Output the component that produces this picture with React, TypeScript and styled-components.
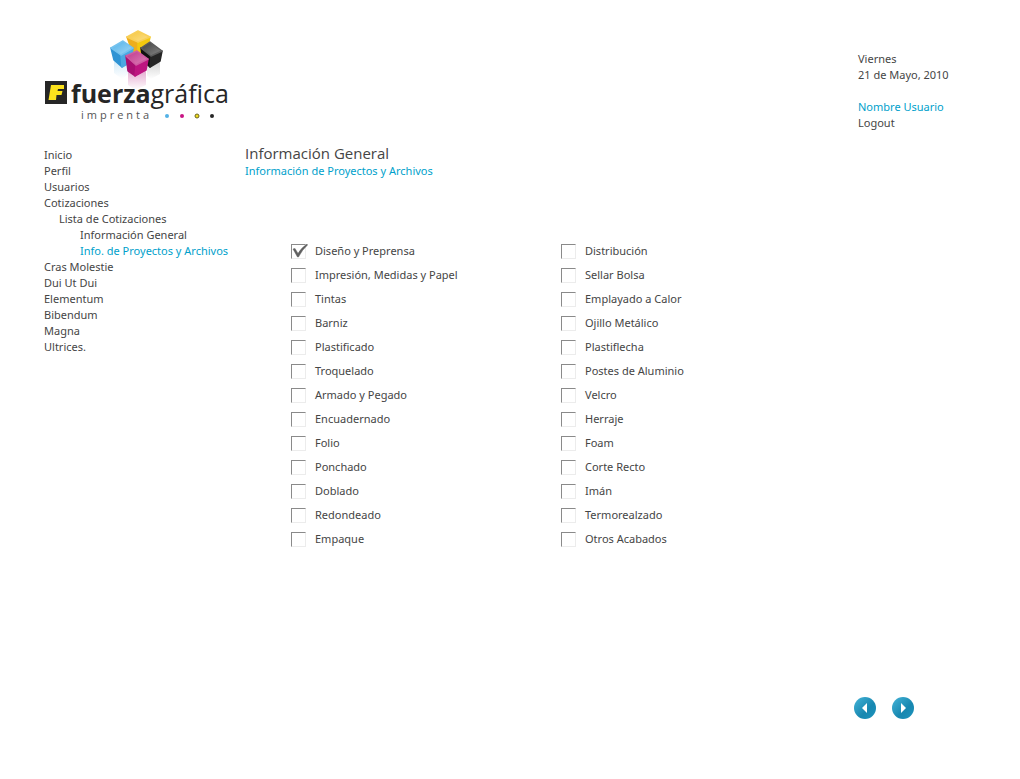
import React from "react";
import styled, { createGlobalStyle } from "styled-components";

const INK = "#454545";
const CYAN = "#009fcb";

const GlobalStyle = createGlobalStyle`
  * { box-sizing: border-box; }
  body {
    margin: 0;
    background: #fff;
    color: ${INK};
    font: 11px/16px "Noto Sans", "Open Sans", sans-serif;
  }
`;

const Page = styled.div`
  padding: 28px 44px 59px;
`;

const Header = styled.header`
  display: flex;
  justify-content: space-between;
  align-items: flex-start;
  min-height: 117px;
`;

const Session = styled.div`
  width: 118px;
  padding-top: 23px;
`;

const DateText = styled.p`
  margin: 0 0 16px;
`;

const TextLink = styled.a<{ $active?: boolean }>`
  display: block;
  color: ${(p) => (p.$active ? CYAN : INK)};
  text-decoration: none;
  white-space: nowrap;
`;

const Body = styled.div`
  display: flex;
`;

const Sidebar = styled.nav`
  flex: 0 0 201px;
  padding-top: 2px;
`;

const NavList = styled.ul`
  margin: 0;
  padding: 0;
  list-style: none;
`;

const NavItem = styled.li<{ $level?: number }>`
  padding-left: ${(p) => [0, 15, 36][p.$level ?? 0]}px;
`;

const Main = styled.main`
  flex: 1;
`;

const Title = styled.h1`
  margin: 0;
  font-family: "Open Sans", sans-serif;
  font-size: 15px;
  line-height: 16px;
  font-weight: 400;
`;

const Subtitle = styled.h2`
  margin: 0;
  color: ${CYAN};
  font-size: 11px;
  line-height: 20px;
  font-weight: 400;
`;

const Options = styled.form`
  display: grid;
  grid-template-columns: repeat(2, minmax(0, 1fr));
  max-width: 586px;
  padding: 58px 0 0 46px;
`;

const OptionRow = styled.label`
  display: flex;
  align-items: center;
  gap: 9px;
  height: 24px;
`;

const CheckWrap = styled.span`
  position: relative;
  display: flex;
`;

const Checkbox = styled.input`
  appearance: none;
  width: 15px;
  height: 15px;
  margin: 0;
  border: 1px solid #ececec;
  border-top-color: #8a8a8a;
  border-left-color: #8a8a8a;
  background: #fff;

  & + svg { display: none; }
  &:checked + svg { display: block; }
`;

const CheckMark = styled.svg`
  position: absolute;
  left: 0;
  top: 0;
  pointer-events: none;
`;

const Pager = styled.footer`
  display: flex;
  justify-content: flex-end;
  gap: 16px;
  padding: 146px 62px 0 0;
`;

const PagerButton = styled.button`
  display: grid;
  place-items: center;
  width: 22px;
  height: 22px;
  padding: 0;
  border: 0;
  border-radius: 50%;
  background: linear-gradient(135deg, #45b4d8, #1787b0 60%, #1d94bd);
  cursor: pointer;
`;

const Wordmark = styled.text`
  font: 400 25px "Open Sans", sans-serif;
  fill: #262626;
`;

const Tagline = styled.text`
  font: 400 11px "Open Sans", sans-serif;
  letter-spacing: 3px;
  fill: #555;
`;

function Logo() {
  return (
    <svg width="190" height="96" viewBox="0 0 190 96" role="img" aria-label="Fuerza Gráfica Imprenta">
      <defs>
        <linearGradient id="yTop" x1="0" y1="0" x2="1" y2="1"><stop offset="0" stopColor="#f6c53c" /><stop offset="1" stopColor="#fbe08a" /></linearGradient>
        <linearGradient id="bTop" x1="0" y1="0" x2="1" y2="1"><stop offset="0" stopColor="#4fb0e8" /><stop offset="1" stopColor="#a4d9f6" /></linearGradient>
        <linearGradient id="mTop" x1="0" y1="0" x2="1" y2="1"><stop offset="0" stopColor="#c0368c" /><stop offset="1" stopColor="#dd83b8" /></linearGradient>
        <linearGradient id="kTop" x1="0" y1="0" x2="1" y2="1"><stop offset="0" stopColor="#3c3c3c" /><stop offset="1" stopColor="#8a8a8a" /></linearGradient>
        <linearGradient id="bRef" x1="0" y1="0" x2="0" y2="1"><stop offset="0" stopColor="#4aa8e0" stopOpacity=".25" /><stop offset="1" stopColor="#4aa8e0" stopOpacity="0" /></linearGradient>
        <linearGradient id="mRef" x1="0" y1="0" x2="0" y2="1"><stop offset="0" stopColor="#b5127c" stopOpacity=".35" /><stop offset="1" stopColor="#b5127c" stopOpacity="0" /></linearGradient>
        <linearGradient id="kRef" x1="0" y1="0" x2="0" y2="1"><stop offset="0" stopColor="#333" stopOpacity=".22" /><stop offset="1" stopColor="#333" stopOpacity="0" /></linearGradient>
      </defs>
      <path d="M70 32 78 39 84 35V46L78 51 70 45Z" fill="url(#bRef)" />
      <path d="M103 36 107 39 116 33V46L107 51 103 48Z" fill="url(#kRef)" />
      <path d="M84 43 91 49 102 43V57L91 62 84 57Z" fill="url(#mRef)" />
      <g strokeLinejoin="round" strokeWidth="1.500">
        <path d="M83 9 94 14 94 27 88 23Z" fill="#eeae1c" stroke="#eeae1c" />
        <path d="M94 14 106 9 103 22 94 27Z" fill="#f4c90e" stroke="#f4c90e" />
        <path d="M94 3 106 9 94 14 83 9Z" fill="url(#yTop)" stroke="#f8cf58" />
        <path d="M67 20 77 27 78 39 70 32Z" fill="#2f93d4" stroke="#2f93d4" />
        <path d="M77 27 89 20 87 34 78 39Z" fill="#4ba8e2" stroke="#4ba8e2" />
        <path d="M79 13 89 20 77 27 67 20Z" fill="url(#bTop)" stroke="#74c2ee" />
        <path d="M97 20 107 28 106 39 99 33Z" fill="#111" stroke="#111" />
        <path d="M107 28 118 23 116 33 106 39Z" fill="#262626" stroke="#262626" />
        <path d="M106 14 118 23 107 28 97 20Z" fill="url(#kTop)" stroke="#5c5c5c" />
        <path d="M82 28 92 37 91 48 84 43Z" fill="#a80f72" stroke="#a80f72" />
        <path d="M92 37 104 31 102 42 91 48Z" fill="#bd1580" stroke="#bd1580" />
        <path d="M93 23 104 31 92 37 82 28Z" fill="url(#mTop)" stroke="#cf5ba2" />
      </g>
      <rect x="1" y="53" width="22" height="23" fill="#262626" />
      <path d="M7 57H20V61H14L13.500 63H18.500L17.500 67H12.500L12 72H4.500Z" fill="#fce21d" />
      <Wordmark x="27" y="75"><tspan fontWeight="700">fuerza</tspan>gráfica</Wordmark>
      <Tagline x="37" y="91">imprenta</Tagline>
      <circle cx="123" cy="88" r="2" fill="#53b1e6" />
      <circle cx="138" cy="88" r="2" fill="#c81483" />
      <circle cx="153" cy="88" r="2" fill="#f0dc1e" stroke="#6b6420" strokeWidth="1" />
      <circle cx="168" cy="88" r="2" fill="#262626" />
    </svg>
  );
}

const navigation: { label: string; level?: number; active?: boolean }[] = [
  { label: "Inicio" },
  { label: "Perfil" },
  { label: "Usuarios" },
  { label: "Cotizaciones" },
  { label: "Lista de Cotizaciones", level: 1 },
  { label: "Información General", level: 2 },
  { label: "Info. de Proyectos y Archivos", level: 2, active: true },
  { label: "Cras Molestie" },
  { label: "Dui Ut Dui" },
  { label: "Elementum" },
  { label: "Bibendum" },
  { label: "Magna" },
  { label: "Ultrices." },
];

const columns = [
  ["Diseño y Preprensa", "Impresión, Medidas y Papel", "Tintas", "Barniz", "Plastificado", "Troquelado", "Armado y Pegado", "Encuadernado", "Folio", "Ponchado", "Doblado", "Redondeado", "Empaque"],
  ["Distribución", "Sellar Bolsa", "Emplayado a Calor", "Ojillo Metálico", "Plastiflecha", "Postes de Aluminio", "Velcro", "Herraje", "Foam", "Corte Recto", "Imán", "Termorealzado", "Otros Acabados"],
];

function Option({ label, checked }: { label: string; checked?: boolean }) {
  return (
    <OptionRow>
      <CheckWrap>
        <Checkbox type="checkbox" defaultChecked={checked} />
        <CheckMark width="17" height="15" viewBox="0 0 17 15" aria-hidden="true">
          <path d="M2 5 4 4.5 7 9.5Q10 4 16 0L16.500 1Q11 6 7.500 13H6.500Z" fill="#606060" stroke="#606060" strokeWidth=".5" />
        </CheckMark>
      </CheckWrap>
      {label}
    </OptionRow>
  );
}

export default function App() {
  return (
    <>
      <GlobalStyle />
      <Page>
        <Header>
          <Logo />
          <Session>
            <DateText>Viernes<br />21 de Mayo, 2010</DateText>
            <TextLink href="#usuario" $active>Nombre Usuario</TextLink>
            <TextLink href="#logout">Logout</TextLink>
          </Session>
        </Header>
        <Body>
          <Sidebar aria-label="Principal">
            <NavList>
              {navigation.map((item) => (
                <NavItem key={item.label} $level={item.level}>
                  <TextLink href="#" $active={item.active}>{item.label}</TextLink>
                </NavItem>
              ))}
            </NavList>
          </Sidebar>
          <Main>
            <Title>Información General</Title>
            <Subtitle>Información de Proyectos y Archivos</Subtitle>
            <Options>
              {columns.map((column, index) => (
                <div key={index}>
                  {column.map((label) => (
                    <Option key={label} label={label} checked={label === "Diseño y Preprensa"} />
                  ))}
                </div>
              ))}
            </Options>
          </Main>
        </Body>
        <Pager>
          <PagerButton type="button" aria-label="Anterior">
            <svg width="8" height="12" viewBox="0 0 8 12" aria-hidden="true"><path d="M6 1V11L1 6Z" fill="#fff" /></svg>
          </PagerButton>
          <PagerButton type="button" aria-label="Siguiente">
            <svg width="8" height="12" viewBox="0 0 8 12" aria-hidden="true"><path d="M2 1V11L7 6Z" fill="#fff" /></svg>
          </PagerButton>
        </Pager>
      </Page>
    </>
  );
}
